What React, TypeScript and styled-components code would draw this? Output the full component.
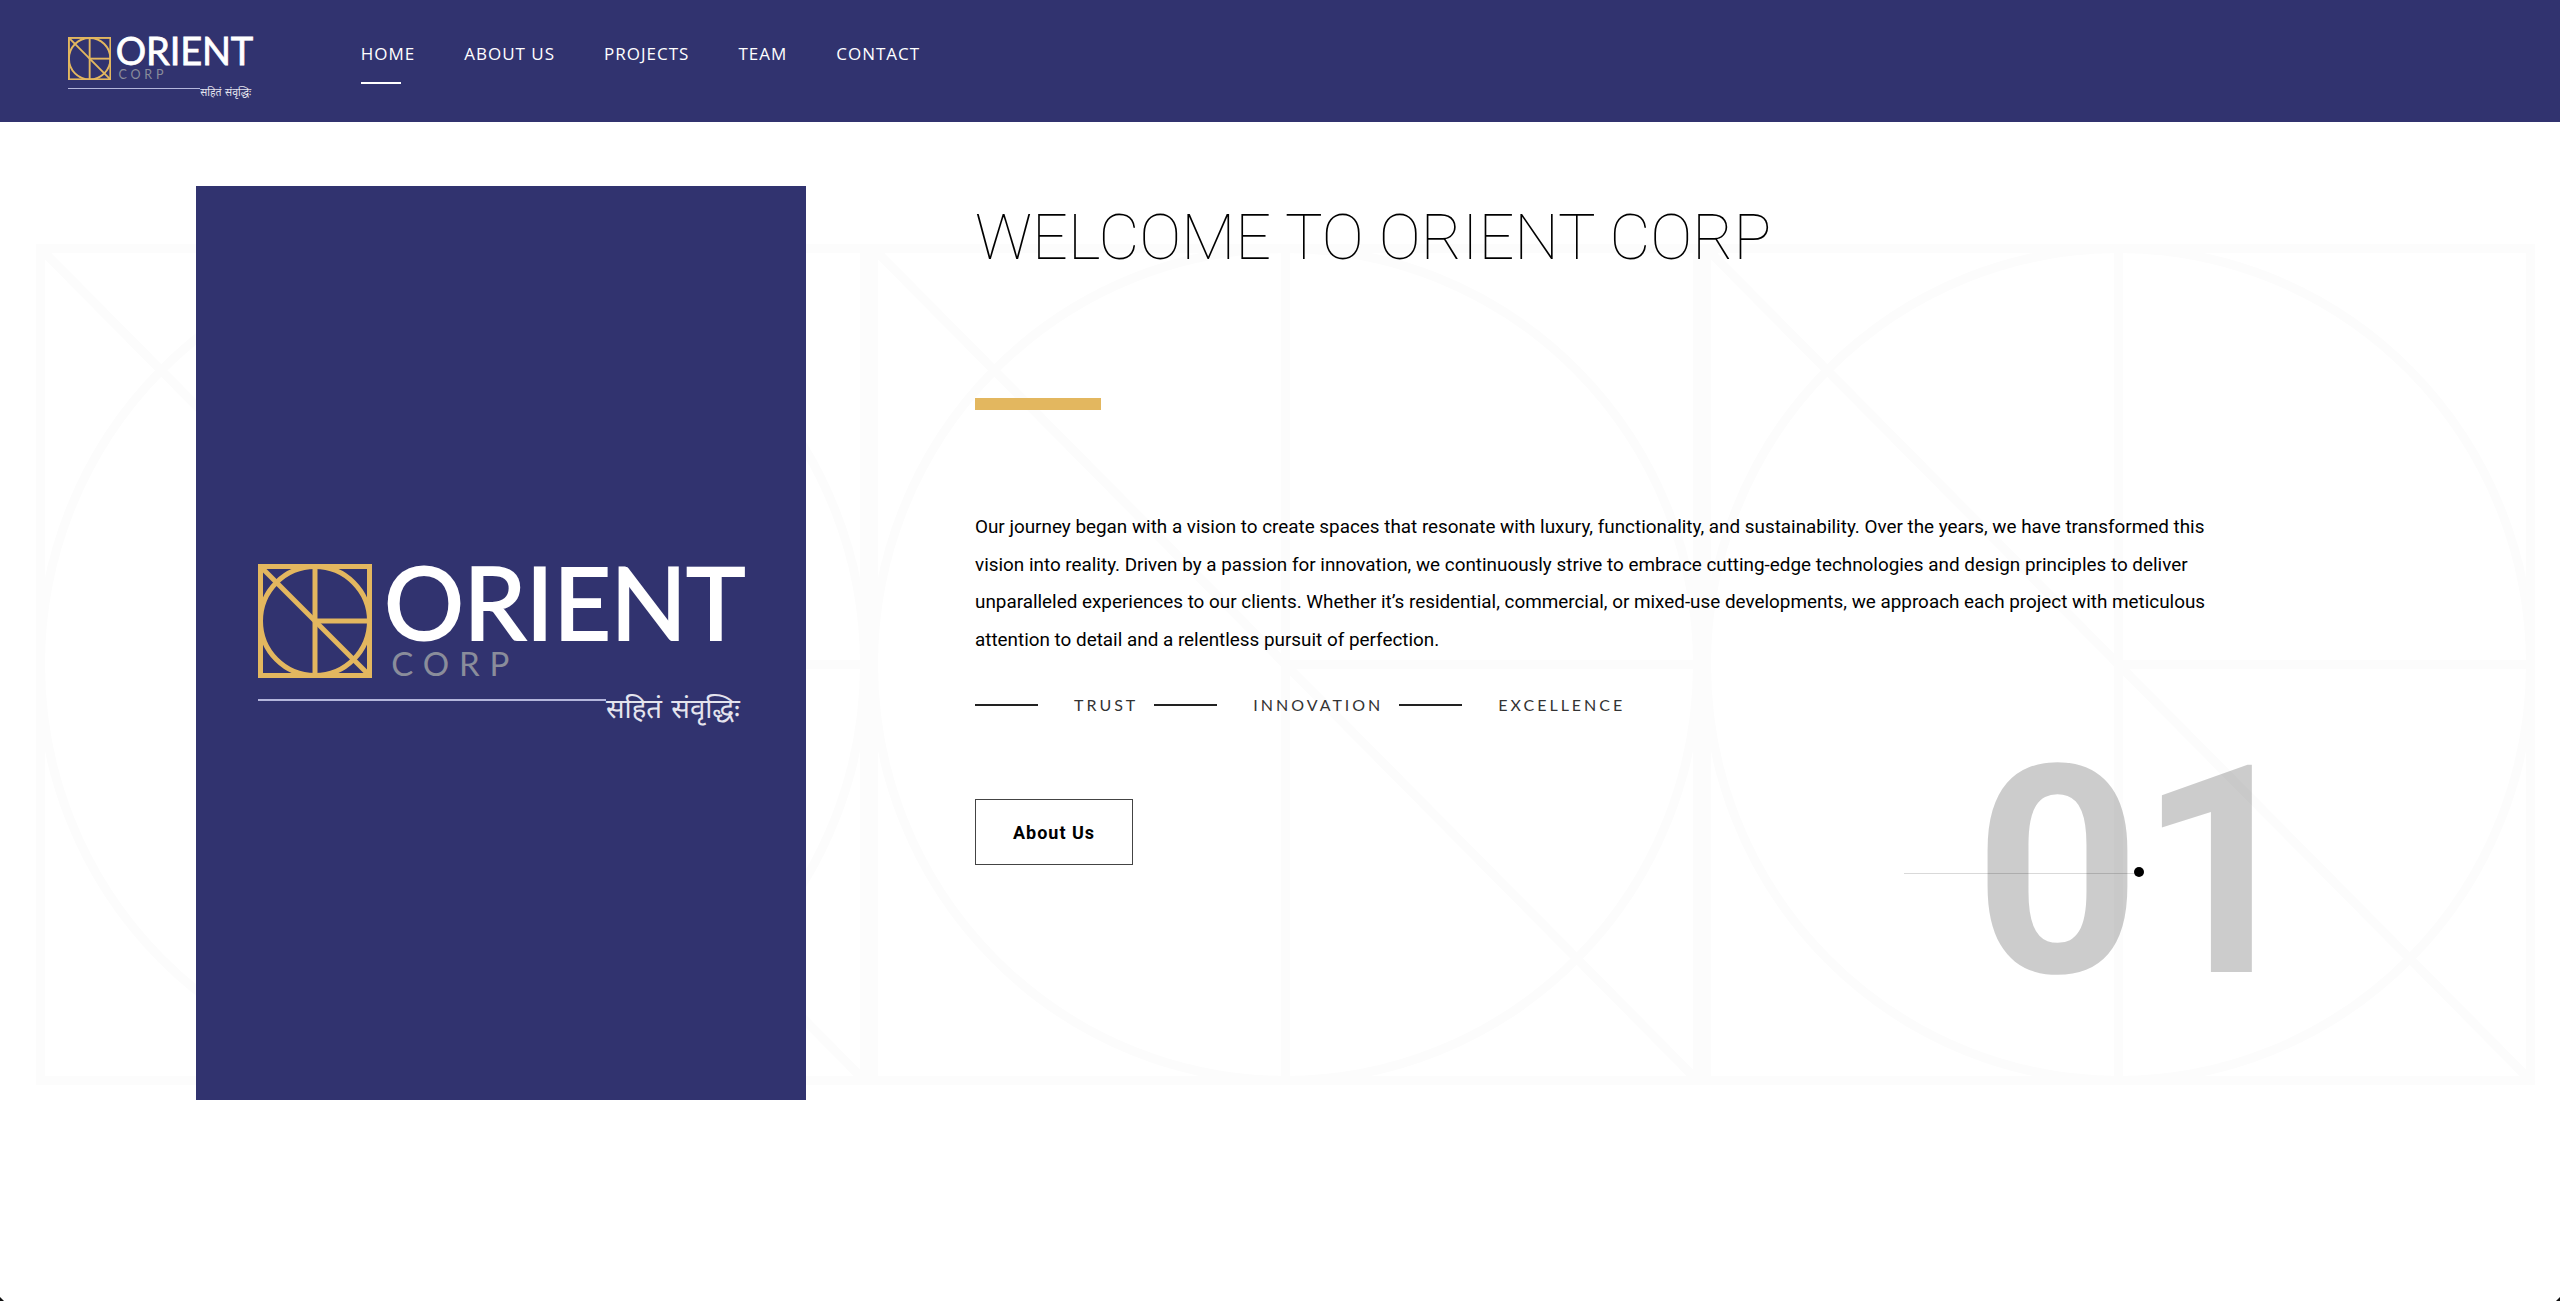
import styled, { createGlobalStyle } from "styled-components";

const navy = "#31336f";
const gold = "#e3b75f";

const GlobalStyle = createGlobalStyle`
  html, body {
    margin: 0;
    padding: 0;
    background: #fff;
    font-family: Roboto, "Liberation Sans", sans-serif;
  }
`;

const Page = styled.div`
  position: relative;
  height: 1301px;
  overflow: hidden;
  background: #fff;
`;

/* the rounded window corners that show at the bottom of the capture */
const Corner = styled.div<{ $side: "left" | "right" }>`
  position: absolute;
  bottom: 0;
  ${(p) => p.$side}: 0;
  width: 4px;
  height: 4px;
  background: #111;
  clip-path: ${(p) =>
    p.$side === "left" ? "polygon(0 0, 100% 100%, 0 100%)" : "polygon(100% 0, 100% 100%, 0 100%)"};
`;

const Header = styled.header`
  display: flex;
  align-items: flex-start;
  height: 122px;
  padding: 37px 0 0 68px;
  box-sizing: border-box;
  background: ${navy};
`;

const Nav = styled.nav`
  display: flex;
  gap: 49px;
  margin-left: 108px;
`;

const NavLink = styled.a<{ $active?: boolean }>`
  position: relative;
  font-family: "Open Sans", sans-serif;
  font-size: 17px;
  line-height: 34px;
  letter-spacing: 1px;
  color: #fff;

  &::after {
    content: "";
    display: ${(p) => (p.$active ? "block" : "none")};
    position: absolute;
    left: 0;
    top: 45px;
    width: 40px;
    height: 2px;
    background: #fff;
  }
`;

/* logo, sized in em so the header and the panel can share it */
const Logo = styled.div<{ $size: number }>`
  display: flex;
  flex-direction: column;
  width: 4.86em;
  font-size: ${(p) => p.$size}px;
  font-family: Lato, "Open Sans", sans-serif;
  color: #fff;
`;

const LogoTop = styled.div`
  display: flex;
  gap: 0.12em;
`;

const LogoMark = styled.svg`
  flex: none;
  width: 1.14em;
  height: 1.14em;
`;

const LogoWords = styled.div`
  display: flex;
  flex-direction: column;
`;

const LogoName = styled.div`
  font-size: 1em;
  font-weight: 400;
  line-height: 0.72em;
  letter-spacing: -0.005em;
  margin-top: 0.01em;
  -webkit-text-stroke: 0.02em #fff;
`;

const LogoCorp = styled.div`
  font-size: 0.33em;
  line-height: 0.72em;
  letter-spacing: 0.3em;
  margin-top: 0.45em;
  margin-left: 0.22em;
  color: #8a8d9b;
`;

const LogoBottom = styled.div`
  display: flex;
  align-items: flex-start;
  margin-top: 0.21em;
`;

const LogoRule = styled.div`
  flex: 1;
  height: 0.02em;
  background: #b4b6dc;
`;

const LogoTagline = styled.div`
  font-family: "Noto Sans", "Noto Sans Devanagari", sans-serif;
  font-size: 0.275em;
  line-height: 1;
  margin-top: -0.17em;
  margin-right: 0.15em;
  word-spacing: 0.08em;
  color: #e4e4ee;
  white-space: nowrap;
`;

const Watermark = styled.div`
  position: absolute;
  left: 36px;
  top: 244px;
  display: flex;
`;

const WatermarkTile = styled.svg`
  display: block;
  width: 833px;
  height: 841px;
`;

const Main = styled.main`
  position: relative;
  display: flex;
  gap: 169px;
  padding: 64px 0 0 196px;
`;

const Panel = styled.div`
  flex: none;
  display: flex;
  align-items: center;
  justify-content: center;
  width: 610px;
  height: 914px;
  background: ${navy};
`;

const Content = styled.div`
  display: flex;
  flex-direction: column;
  align-items: flex-start;
  width: 1240px;
`;

const Title = styled.h1`
  margin: 12px 0 0;
  font-size: 63px;
  font-weight: 100;
  line-height: 80px;
  color: #000;
  white-space: nowrap;
`;

const Accent = styled.div`
  width: 126px;
  height: 12px;
  margin-top: 120px;
  background: ${gold};
`;

const Intro = styled.p`
  margin: 98px 0 0;
  font-size: 18.87px;
  line-height: 37.6px;
  color: #000;
`;

const Values = styled.div`
  display: flex;
  align-items: center;
  margin-top: 35px;
`;

const ValueLine = styled.span`
  width: 63px;
  height: 2px;
  background: #222;
`;

const ValueText = styled.span`
  margin: 0 16px 0 36px;
  font-family: Lato, sans-serif;
  font-size: 16px;
  line-height: 24px;
  letter-spacing: 3px;
  color: #333;
`;

const Button = styled.a`
  display: flex;
  align-items: center;
  justify-content: center;
  box-sizing: border-box;
  width: 158px;
  height: 66px;
  margin-top: 82px;
  border: 1px solid #444;
  font-size: 18px;
  font-weight: 700;
  letter-spacing: 1px;
  color: #000;
`;

const Counter = styled.div`
  position: absolute;
  left: 1904px;
  top: 700px;
  width: 360px;
  height: 300px;
`;

const CounterDigits = styled.div`
  position: absolute;
  left: 70px;
  top: 23px;
  font-size: 291px;
  font-weight: 700;
  line-height: 300px;
  letter-spacing: -3px;
  color: rgba(0, 0, 0, 0.2);
`;

const CounterLine = styled.div`
  position: absolute;
  left: 0;
  top: 173px;
  width: 230px;
  height: 1px;
  background: rgba(0, 0, 0, 0.15);
`;

const CounterDot = styled.div`
  position: absolute;
  left: 230px;
  top: 167px;
  width: 10px;
  height: 10px;
  border-radius: 50%;
  background: #000;
`;

function MarkShapes({ size, weight }: { size: number; weight: number }) {
  const inset = weight / 2;
  const mid = size / 2;
  const far = size - inset;
  return (
    <>
      <rect x={inset} y={inset} width={size - weight} height={size - weight} />
      <circle cx={mid} cy={mid} r={mid - inset} />
      <line x1={mid} y1={inset} x2={mid} y2={far} />
      <line x1={mid} y1={mid} x2={far} y2={mid} />
      <line x1={inset} y1={inset} x2={far} y2={far} />
    </>
  );
}

function BrandLogo({ size }: { size: number }) {
  return (
    <Logo $size={size}>
      <LogoTop>
        <LogoMark viewBox="0 0 114 114" fill="none" stroke={gold} strokeWidth={5}>
          <MarkShapes size={114} weight={5} />
        </LogoMark>
        <LogoWords>
          <LogoName>ORIENT</LogoName>
          <LogoCorp>CORP</LogoCorp>
        </LogoWords>
      </LogoTop>
      <LogoBottom>
        <LogoRule />
        <LogoTagline>सहितं संवृद्धिः</LogoTagline>
      </LogoBottom>
    </Logo>
  );
}

export default function App() {
  return (
    <Page>
      <GlobalStyle />
      <Watermark>
        {[0, 1, 2].map((i) => (
          <WatermarkTile
            key={i}
            viewBox="0 0 833 833"
            preserveAspectRatio="none"
            fill="none"
            stroke="#fcfcfc"
            strokeWidth={9}
          >
            <MarkShapes size={833} weight={9} />
          </WatermarkTile>
        ))}
      </Watermark>
      <Header>
        <BrandLogo size={38} />
        <Nav>
          <NavLink $active>HOME</NavLink>
          <NavLink>ABOUT US</NavLink>
          <NavLink>PROJECTS</NavLink>
          <NavLink>TEAM</NavLink>
          <NavLink>CONTACT</NavLink>
        </Nav>
      </Header>
      <Main>
        <Panel>
          <BrandLogo size={100} />
        </Panel>
        <Content>
          <Title>WELCOME TO ORIENT CORP</Title>
          <Accent />
          <Intro>
            Our journey began with a vision to create spaces that resonate with luxury, functionality, and
            sustainability. Over the years, we have transformed this vision into reality. Driven by a passion for
            innovation, we continuously strive to embrace cutting-edge technologies and design principles to deliver
            unparalleled experiences to our clients. Whether it’s residential, commercial, or mixed-use developments,
            we approach each project with meticulous attention to detail and a relentless pursuit of perfection.
          </Intro>
          <Values>
            <ValueLine />
            <ValueText>TRUST</ValueText>
            <ValueLine />
            <ValueText>INNOVATION</ValueText>
            <ValueLine />
            <ValueText>EXCELLENCE</ValueText>
          </Values>
          <Button>About Us</Button>
        </Content>
      </Main>
      <Counter>
        <CounterDigits>01</CounterDigits>
        <CounterLine />
        <CounterDot />
      </Counter>
      <Corner $side="left" />
      <Corner $side="right" />
    </Page>
  );
}
